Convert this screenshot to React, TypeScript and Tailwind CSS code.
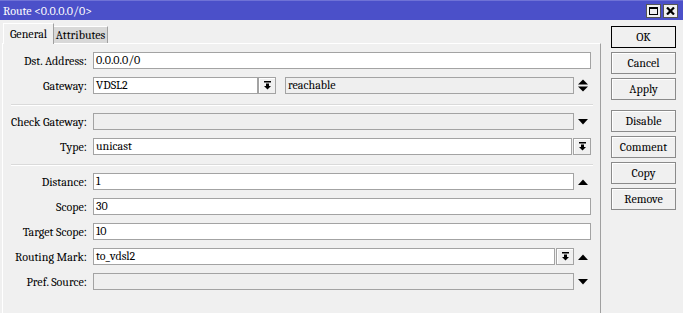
import React from "react";

const DropIcon = () => (
  <svg width="9" height="9" viewBox="0 0 9 9">
    <rect x="1" y="0" width="7" height="1.5" fill="#000" />
    <rect x="3" y="2.5" width="3" height="2.5" fill="#000" />
    <polygon points="1,5 8,5 4.5,8.5" fill="#000" />
  </svg>
);

const Arrow = ({ dir }: { dir: "up" | "down" | "both" }) => (
  <div className="w-[17px] h-[17px] flex items-center justify-center">
    {dir === "up" && (
      <svg width="10" height="6" viewBox="0 0 10 6">
        <polygon points="0,6 10,6 5,0.5" fill="#000" />
      </svg>
    )}
    {dir === "down" && (
      <svg width="10" height="6" viewBox="0 0 10 6">
        <polygon points="0,0 10,0 5,5.5" fill="#000" />
      </svg>
    )}
    {dir === "both" && (
      <svg width="10" height="13" viewBox="0 0 10 13">
        <polygon points="0,5.5 10,5.5 5,0.5" fill="#000" />
        <polygon points="0,7.5 10,7.5 5,12.5" fill="#000" />
      </svg>
    )}
  </div>
);

const DropBtn = () => (
  <div className="w-[18px] h-[17px] border border-[#a3a3a3] bg-[#f0f0f0] shadow-[inset_1px_1px_0_#fff] flex items-center justify-center shrink-0">
    <DropIcon />
  </div>
);

const Input = ({ value, disabled, className = "" }: { value?: string; disabled?: boolean; className?: string }) => (
  <div
    className={`h-[17px] border border-[#a3a3a3] ${disabled ? "bg-[#efefef]" : "bg-white"} pl-[2px] leading-[15px] whitespace-nowrap overflow-hidden ${className}`}
  >
    {value}
  </div>
);

const Row = ({ label, children }: { label: string; children: React.ReactNode }) => (
  <div className="flex items-center h-[17px]">
    <div className="w-[84px] text-right whitespace-nowrap">{label}</div>
    <div className="ml-[6px] w-[498px] flex items-center">{children}</div>
  </div>
);

const Separator = ({ top, bottom }: { top: string; bottom: string }) => (
  <div className={`${top} ${bottom} ml-[8px] w-[582px] h-[2px] border-t border-[#dadada] border-b border-b-white`} />
);

const buttons = [
  ["OK", "Cancel", "Apply"],
  ["Disable", "Comment", "Copy", "Remove"],
];

export default function App() {
  return (
    <div className="w-[683px] h-[313px] bg-[#f0f0f0] overflow-hidden text-[12px] text-black font-serif">
      {/* Title bar */}
      <div className="h-[20px] bg-[#4b50c9] border-t border-[#6f72d6] flex items-center justify-between pl-[3px] pr-[5px]">
        <span className="text-white text-[12px] leading-none">Route &lt;0.0.0.0/0&gt;</span>
        <div className="flex gap-[2px]">
          <div className="w-[15px] h-[14px] bg-[#f0f0f0] border border-[#555] flex items-center justify-center">
            <div className="w-[9px] h-[8px] border border-black border-t-2" />
          </div>
          <div className="w-[15px] h-[14px] bg-[#f0f0f0] border border-[#555] flex items-center justify-center">
            <svg width="9" height="8" viewBox="0 0 9 8">
              <path d="M1 0.5 L8 7.5 M8 0.5 L1 7.5" stroke="#000" strokeWidth="2.2" />
            </svg>
          </div>
        </div>
      </div>

      <div className="flex">
        {/* Left: tabs + panel */}
        <div className="w-[601px] pl-[2px] pt-[3px]">
          <div className="flex items-end h-[20px] pl-[1px]">
            <div className="h-[21px] w-[51px] bg-[#f0f0f0] border-t border-l border-white border-r border-r-[#a0a0a0] flex items-center justify-center relative top-[1px] z-10">
              General
            </div>
            <div className="h-[17px] w-[54px] bg-[#d8d8d8] border-t border-white border-r border-r-[#a0a0a0] flex items-center justify-center">
              Attributes
            </div>
          </div>
          <div className="h-[270px] border-t border-l border-white border-r border-r-[#a0a0a0] pt-[8px]">
            <div className="flex flex-col gap-[8px]">
              <Row label="Dst. Address:">
                <Input value="0.0.0.0/0" className="flex-1" />
              </Row>
              <Row label="Gateway:">
                <Input value="VDSL2" className="w-[165px]" />
                <DropBtn />
                <Input value="reachable" disabled className="flex-1 ml-[9px]" />
                <Arrow dir="both" />
              </Row>
            </div>
            <Separator top="mt-[10px]" bottom="mb-[7px]" />
            <div className="flex flex-col gap-[8px]">
              <Row label="Check Gateway:">
                <Input disabled className="flex-1" />
                <Arrow dir="down" />
              </Row>
              <Row label="Type:">
                <Input value="unicast" className="flex-1 mr-[1px]" />
                <DropBtn />
              </Row>
            </div>
            <Separator top="mt-[9px]" bottom="mb-[7px]" />
            <div className="flex flex-col gap-[8px]">
              <Row label="Distance:">
                <Input value="1" className="flex-1" />
                <Arrow dir="up" />
              </Row>
              <Row label="Scope:">
                <Input value="30" className="flex-1" />
              </Row>
              <Row label="Target Scope:">
                <Input value="10" className="flex-1" />
              </Row>
              <Row label="Routing Mark:">
                <Input value="to_vdsl2" className="flex-1 mr-[1px]" />
                <DropBtn />
                <Arrow dir="up" />
              </Row>
              <Row label="Pref. Source:">
                <Input disabled className="flex-1" />
                <Arrow dir="down" />
              </Row>
            </div>
          </div>
        </div>

        {/* Right: buttons */}
        <div className="ml-[10px] pt-[6px] flex flex-col gap-[10px]">
          {buttons.map((group, gi) => (
            <div key={gi} className="flex flex-col gap-[4px]">
              {group.map((b) => (
                <div
                  key={b}
                  className={`w-[65px] h-[22px] flex items-center justify-center bg-[#f0f0f0] border ${
                    b === "OK" ? "border-black" : "border-[#8a8a8a] shadow-[inset_1px_1px_0_#fff]"
                  }`}
                >
                  {b}
                </div>
              ))}
            </div>
          ))}
        </div>
      </div>
    </div>
  );
}
